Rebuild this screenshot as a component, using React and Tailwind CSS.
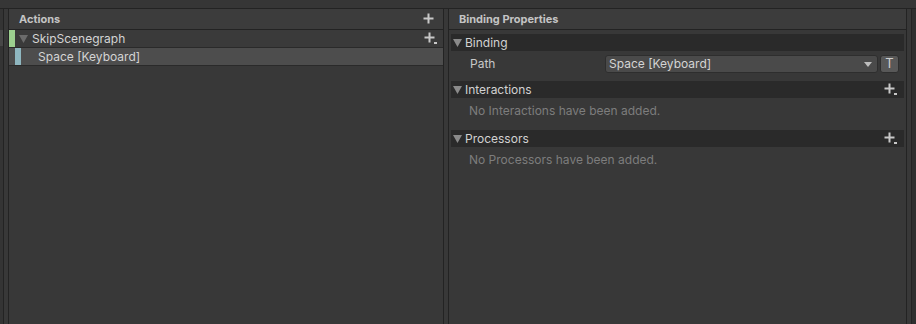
import React from 'react'

// Unity-style plus icon, optionally with the small dropdown tick
function PlusIcon({ menu = false }) {
  return (
    <svg width="14" height="13" viewBox="0 0 14 13" className="block">
      <rect x="4.5" y="0.5" width="2" height="10" fill="#c8c8c8" />
      <rect x="0.5" y="4.5" width="10" height="2" fill="#c8c8c8" />
      {menu && <rect x="10" y="10" width="3" height="2" fill="#c8c8c8" />}
    </svg>
  )
}

function Tri({ color = '#8a8a8a' }) {
  return (
    <svg width="9" height="8" viewBox="0 0 9 8" className="block">
      <polygon points="0,0 9,0 4.5,8" fill={color} />
    </svg>
  )
}

function Foldout({ title, empty, children }) {
  return (
    <div className="flex flex-col">
      <div className="h-[17px] bg-[#2a2a2a] flex items-center pl-[2px] pr-[6px]">
        <Tri />
        <span className="ml-[3px] text-[12px] text-[#d2d2d2] leading-none flex-1">{title}</span>
        {empty !== undefined && <PlusIcon menu />}
      </div>
      {empty !== undefined && (
        <div className="h-[26px] flex items-center pl-[18px] text-[12px] text-[#7d7d7d]">{empty}</div>
      )}
      {children}
    </div>
  )
}

export default function App() {
  return (
    <div
      className="w-[916px] h-[324px] bg-[#383838] flex flex-col overflow-hidden"
      style={{ fontFamily: 'Inter, "Noto Sans", sans-serif' }}
    >
      <div className="h-[9px] bg-[#363636] border-b border-[#232323] shrink-0" />

      <div className="flex-1 flex">
        {/* far-left sliver of a neighbouring panel */}
        <div className="w-[4px] bg-[#343434] border-r border-[#232323] flex flex-col">
          <div className="h-[21px]" />
          <div className="h-[16px] bg-[#474747]" />
        </div>
        <div className="w-[4px]" />

        {/* Actions panel */}
        <div className="w-[436px] border-x border-[#232323] flex flex-col">
          <div className="h-[21px] bg-[#3c3c3c] border-b border-[#232323] flex items-center pl-[10px] pr-[6px]">
            <span className="text-[11px] font-bold text-[#c4c4c4] flex-1">Actions</span>
            <PlusIcon />
          </div>
          <div className="h-[17px] bg-[#3a3a3a] flex items-center pr-[5px]">
            <div className="w-[6px] h-full bg-[#9ccf8f]" />
            <div className="ml-[4px]"><Tri color="#6b6b6b" /></div>
            <span className="ml-[4px] text-[12px] text-[#d4d4d4] flex-1">SkipScenegraph</span>
            <PlusIcon menu />
          </div>
          <div className="h-[19px] bg-[#4d4d4d] border-y border-[#2a2a2a] flex items-center">
            <div className="w-[6px]" />
            <div className="w-[6px] h-full bg-[#8fb7c0]" />
            <span className="ml-[17px] text-[12px] text-[#d4d4d4]">Space [Keyboard]</span>
          </div>
        </div>

        <div className="w-[4px]" />

        {/* Binding Properties panel */}
        <div className="w-[459px] border-x border-[#232323] flex flex-col">
          <div className="h-[21px] bg-[#3c3c3c] border-b border-[#232323] flex items-center pl-[10px]">
            <span className="text-[11px] font-bold text-[#c4c4c4]">Binding Properties</span>
          </div>
          <div className="flex flex-col pl-[2px] pr-[2px] pt-[4px]">
            <Foldout title="Binding">
              <div className="h-[24px] pt-[2px] flex items-center">
                <span className="w-[154px] pl-[19px] text-[12px] text-[#c8c8c8]">Path</span>
                <div className="w-[273px] h-[18px] bg-[#4a4a4a] border border-[#2e2e2e] rounded-[3px] flex items-center pl-[3px] pr-[5px]">
                  <span className="flex-1 text-[12px] text-[#d4d4d4]">Space [Keyboard]</span>
                  <svg width="8" height="5" viewBox="0 0 8 5"><polygon points="0,0 8,0 4,5" fill="#bdbdbd" /></svg>
                </div>
                <div className="ml-[2px] w-[19px] h-[18px] bg-[#585858] border border-[#2e2e2e] rounded-[3px] flex items-center justify-center text-[13px] text-[#cfcfcf]">
                  T
                </div>
              </div>
            </Foldout>
            <div className="h-[6px]" />
            <Foldout title="Interactions" empty="No Interactions have been added." />
            <div className="h-[6px]" />
            <Foldout title="Processors" empty="No Processors have been added." />
          </div>
        </div>

        <div className="w-[4px]" />
        <div className="flex-1 bg-[#2f2f2f] border-l border-[#232323]" />
      </div>
    </div>
  )
}
